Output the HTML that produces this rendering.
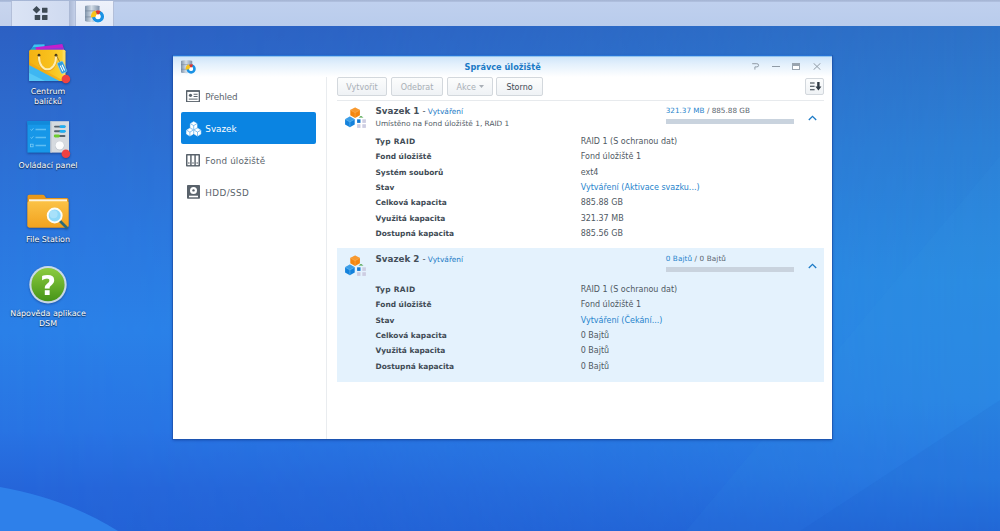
<!DOCTYPE html>
<html lang="cs">
<head>
<meta charset="utf-8">
<title>Správce úložiště</title>
<style>
*{box-sizing:border-box;margin:0;padding:0}
html,body{width:1000px;height:531px;overflow:hidden}
body{position:relative;font-family:"DejaVu Sans","Liberation Sans",sans-serif;font-size:8px;color:#414b55;background:#2a6fd9}
#bg{position:absolute;left:0;top:0;width:1000px;height:531px}
#taskbar{position:absolute;left:0;top:0;width:1000px;height:26px;background:linear-gradient(#a3b3d2 0,#aebedd 1.5px,#bfd0ee 2.5px,#b9ccec 100%)}
.tb{position:absolute;top:1px;height:25px}
#tb-l{left:0;width:11px;top:2px;height:24px;background:linear-gradient(#c8d5ee,#c2d0eb)}
#tb-main{left:11px;width:58px;background:linear-gradient(90deg,#dbe4f5,#cfdaf0);border-left:1px solid #b3bfd9}
#tb-sep{left:69px;width:5.5px;background:linear-gradient(90deg,#a9b7d3,#c3cfe8)}
#tb-app{left:74.5px;width:39px;background:linear-gradient(#eef2fb,#e2e9f7);border-left:1px solid #b3bfd9;border-right:1px solid #b3bfd9}
#taskbar svg{position:absolute}
.dl{position:absolute;left:0;width:96px;text-align:center;color:#fff;font-size:7.95px;line-height:10px;text-shadow:0 1px 1px rgba(0,0,0,.6),0 0 2px rgba(0,0,0,.35);white-space:nowrap}
.di{position:absolute;filter:drop-shadow(0 1px 1px rgba(0,10,60,.4))}
#win{position:absolute;left:173px;top:56px;width:659.3px;height:382.6px;background:#fff;box-shadow:0 -1px 0 0 #2874d6,0 0 0 1px rgba(28,80,170,.6),0 1px 3px 0 rgba(0,20,90,.45)}
#titlebar{position:absolute;left:0;top:0;width:100%;height:22px;background:linear-gradient(#55a4e6 0,#cfe5f9 1px,#e3f0fc 8px,#fff 21px)}
#title{position:absolute;left:0;width:100%;top:6px;text-align:center;font-weight:bold;color:#1b7ac6;font-size:8.2px;line-height:11px}
#titlebar svg{position:absolute}
#side-sep{position:absolute;left:153px;top:21px;width:1px;bottom:0;background:#e9ecef}
.nav{position:absolute;left:8px;width:135px;height:32px;font-size:8.8px;line-height:32px;color:#5b646c;white-space:nowrap}
.nav b{position:absolute;left:24.3px;top:.7px;font-weight:normal}
.nav.sel{background:#0a84e2;color:#fff;border-radius:2px}
.nav svg{position:absolute}
.btn{position:absolute;top:21.2px;height:18.4px;border:1px solid #d3d8dd;border-radius:2px;background:linear-gradient(#fcfdfd,#eff2f5);font-size:8px;line-height:14px;padding-top:3px;text-align:center;color:#a9afb6;white-space:nowrap}
.btn.on{color:#414b55}
.btn svg{position:absolute}
#tool-sep{position:absolute;left:164px;top:44px;width:487px;height:1px;background:#e7eaed}
.vol{position:absolute;left:164px;width:487px}
.vol svg{position:absolute}
.vt{position:absolute;left:38.5px;font-weight:bold;font-size:8.75px;line-height:12px;color:#454f59;white-space:nowrap}
.vt span{font-weight:normal;font-size:7.4px;color:#1b7ac6}
.vt i{font-style:normal;color:#454f59;font-size:8.5px}
.vs{position:absolute;left:38.5px;font-size:7.37px;line-height:10px;white-space:nowrap;color:#4f5963}
.row{position:absolute;left:38.5px;font-weight:bold;font-size:7.45px;line-height:10px;white-space:nowrap}
.val{position:absolute;left:243.7px;font-size:8px;line-height:10px;white-space:nowrap;color:#4f5963}
.blue,.val.blue{color:#2583cc}
.use{position:absolute;left:328.7px;font-size:7.25px;line-height:10px;white-space:nowrap;color:#5a646e}
.bar{position:absolute;left:328.5px;width:128px;height:4.5px;background:#c9d3de}
</style>
</head>
<body>
<svg id="bg" viewBox="0 0 1000 531" preserveAspectRatio="none">
<defs>
<linearGradient id="gr" x1="0" y1="0" x2="0" y2="1">
<stop offset="0" stop-color="#2d70c6"/><stop offset=".05" stop-color="#2d72c8"/><stop offset=".28" stop-color="#2c80d6"/><stop offset=".53" stop-color="#2a8ce2"/><stop offset=".75" stop-color="#2a86e4"/><stop offset=".9" stop-color="#2778e2"/><stop offset="1" stop-color="#2268d8"/>
</linearGradient>
<linearGradient id="gl" x1="0" y1="0" x2="0" y2="1">
<stop offset="0" stop-color="#2c5ec0"/><stop offset=".05" stop-color="#2c60c3"/><stop offset=".19" stop-color="#2d69cc"/><stop offset=".43" stop-color="#2b76de"/><stop offset=".62" stop-color="#2a80e8"/><stop offset=".81" stop-color="#2873e3"/><stop offset=".92" stop-color="#2565d9"/><stop offset="1" stop-color="#2362d6"/>
</linearGradient>
<linearGradient id="gm" x1="0" y1="0" x2="1" y2="0">
<stop offset="0" stop-color="#fff"/><stop offset=".35" stop-color="#fff" stop-opacity=".8"/><stop offset="1" stop-color="#fff" stop-opacity="0"/>
</linearGradient>
<mask id="mk"><rect width="1000" height="531" fill="url(#gm)"/></mask>
</defs>
<rect width="1000" height="531" fill="url(#gr)"/>
<rect width="1000" height="531" fill="url(#gl)" mask="url(#mk)"/>
<path d="M0 487 C45 495 85 510 118 531 L0 531Z" fill="#2e80ea"/>
<path d="M1000 156 L686 531 L1000 531Z" fill="#49a6f0" opacity=".06"/>
<path d="M1000 400 L800 531 L1000 531Z" fill="#1a50c0" opacity=".09"/>
</svg>
<div id="taskbar">
<div class="tb" id="tb-l"></div>
<div class="tb" id="tb-main"></div>
<div class="tb" id="tb-sep"></div>
<div class="tb" id="tb-app"></div>
<svg style="left:32px;top:5px" width="17" height="16" viewBox="0 0 17 16"><g fill="#3e4a55"><path d="M4.5 1 L8.3 4.8 L4.5 8.6 L.7 4.8Z"/><rect x="10" y="2.7" width="5.5" height="5" rx=".4"/><rect x="2.7" y="10" width="5.5" height="5" rx=".4"/><rect x="10" y="10" width="5.5" height="5" rx=".4"/></g></svg>
<svg style="left:84.5px;top:4.5px" width="20" height="18" viewBox="0 0 20 18">
<defs><linearGradient id="cya" x1="0" y1="0" x2="1" y2="0"><stop offset="0" stop-color="#7f93aa"/><stop offset=".45" stop-color="#d3dde7"/><stop offset="1" stop-color="#7d90a8"/></linearGradient></defs>
<path d="M0 1.2 C0 -.2 14.5 -.2 14.5 1.2 V15.8 C14.5 17.4 0 17.4 0 15.8Z" fill="url(#cya)"/>
<path d="M0 5.9 H14.5 M0 11.9 H14.5" stroke="#6b7d93" stroke-width=".6"/>
<circle cx="13" cy="11.5" r="6.4" fill="#fff"/>
<circle cx="13" cy="11.5" r="4.4" fill="none" stroke="#1b92e4" stroke-width="3.4"/>
<path d="M13 11.5 L6 12.4 A6.6 6.6 0 0 1 10.4 5.4Z" fill="#f8c21c"/>
<path d="M13 11.5 L10.6 5.8 A6.2 6.2 0 0 1 15.6 5.9Z" fill="#e5352b"/>
<circle cx="13" cy="11.5" r="2.3" fill="#fff"/>
</svg>
</div>
<svg class="di" style="left:26px;top:42px" width="46" height="44" viewBox="0 0 46 44">
<defs><linearGradient id="pg" x1="0" y1="0" x2="1" y2="0"><stop offset="0" stop-color="#f3b212"/><stop offset=".55" stop-color="#f8c01c"/><stop offset="1" stop-color="#fdd535"/></linearGradient></defs>
<path d="M5.5 6.5 L8 2.4 L18.5 2.2 L19 8Z" fill="#3cc4f2"/>
<path d="M4.2 8 L6.5 5 L12 5 L12 8Z" fill="#1f9fd8"/>
<path d="M9.5 5.2 L36.3 2 L38.3 8.5 L10 9Z" fill="#c41fcc"/>
<path d="M14 7 L37.5 5.6 L38.3 8.5 L14 9Z" fill="#8b35d8"/>
<path d="M3.1 9.3 Q3.1 7.8 4.6 7.8 H37.9 Q39.4 7.8 39.4 9.3 V38.9 H3.1Z" fill="url(#pg)"/>
<path d="M36.6 7.8 H37.9 Q39.4 7.8 39.4 9.3 V38.9 H36.6Z" fill="#fde27a" opacity=".6"/>
<path d="M3.1 22.9 L33.7 38.9 H3.1Z" fill="#3eb6f2"/>
<path d="M3.1 31 L19 38.9 H3.1Z" fill="#56c8f7"/>
<path d="M3.1 22.9 L33.7 38.9 L38 38.9 L3.1 20.2Z" fill="#ee9d15" opacity=".5"/>
<path d="M13 14.4 C13 31.5 30 31.5 30 14.4" fill="none" stroke="#e59a12" stroke-width="2.6" stroke-linecap="round" transform="translate(0 .7)"/>
<path d="M13 14.4 C13 31.5 30 31.5 30 14.4" fill="none" stroke="#fdeeb0" stroke-width="2.1" stroke-linecap="round"/>
<circle cx="13" cy="13.2" r="1.4" fill="#4a3a18"/><circle cx="30" cy="13.2" r="1.4" fill="#4a3a18"/>
<path d="M30.6 13.5 L34 20.5" stroke="#8a6a2a" stroke-width=".7"/>
<g transform="rotate(-24 36.1 25.4)"><rect x="33.1" y="19.6" width="6" height="11.6" rx="1.1" fill="#2f9de0" stroke="#8fd0f5" stroke-width=".6"/><path d="M35.1 23 V29.3 M37.1 23 V29.3" stroke="#fff" stroke-width="1.1"/></g>
<circle cx="39.9" cy="37" r="4.3" fill="#ef4242"/>
</svg>
<div class="dl" style="top:86.5px">Centrum<br>balíčků</div>
<svg class="di" style="left:26px;top:119px" width="46" height="42" viewBox="0 0 46 42">
<rect x="1.4" y="2.2" width="23" height="31.4" fill="#1797e8"/>
<rect x="1.4" y="2.2" width="23" height="3.6" fill="#128ada"/>
<rect x="24.4" y="2.2" width="18.6" height="31.4" fill="#d6dadf"/>
<rect x="24.4" y="2.2" width="1.3" height="31.4" fill="#c3c9d0"/>
<g stroke="#8fd8fb" stroke-width="1.5" opacity=".6"><path d="M9.5 10.6 H20 M9.5 18.6 H20 M9.5 26.6 H20"/></g>
<g fill="none" stroke="#8fd8fb" stroke-width=".8" opacity=".8"><path d="M4.6 10.3 l1 1.2 l1.8 -2.2 M4.6 18.3 l1 1.2 l1.8 -2.2"/><rect x="4.5" y="25.2" width="2.6" height="2.6"/></g>
<g stroke-linecap="round"><path d="M29 7.6 H38.5" stroke="#56616b" stroke-width="1.9"/><path d="M35 7.6 H38.3" stroke="#20aef2" stroke-width="2.8"/><path d="M29 12.3 H38.5" stroke="#56616b" stroke-width="1.9"/><path d="M35 12.3 H38.3" stroke="#20aef2" stroke-width="2.8"/><path d="M29 17 H38.5" stroke="#56616b" stroke-width="1.9"/><path d="M29.2 17 H32.5" stroke="#6ccb2e" stroke-width="2.8"/></g>
<circle cx="33.7" cy="26.8" r="4.7" fill="#c0c6cd"/>
<circle cx="33.7" cy="26.4" r="4.2" fill="#fbfcfd"/>
<circle cx="39.9" cy="34.8" r="4.3" fill="#ef4242"/>
</svg>
<div class="dl" style="top:161px">Ovládací panel</div>
<svg class="di" style="left:26px;top:193px" width="46" height="38" viewBox="0 0 46 38">
<defs><linearGradient id="fo" x1="0" y1="0" x2="0" y2="1"><stop offset="0" stop-color="#fbc246"/><stop offset="1" stop-color="#f2a21e"/></linearGradient></defs>
<path d="M1.5 3.5 Q1.5 1.7 3.3 1.7 H16.5 Q18 1.7 18.8 3 L20 5 H40.7 Q42.5 5 42.5 6.8 V32.7 Q42.5 34.5 40.7 34.5 H3.3 Q1.5 34.5 1.5 32.7Z" fill="#e8981a"/>
<rect x="3" y="6.3" width="38" height="4" fill="#fdf3dc"/>
<path d="M1.5 9.8 Q1.5 8.3 3 8.3 H41 Q42.5 8.3 42.5 9.8 V32.7 Q42.5 34.5 40.7 34.5 H3.3 Q1.5 34.5 1.5 32.7Z" fill="url(#fo)"/>
<path d="M33.5 27.5 L40.5 34.5" stroke="#2c6a78" stroke-width="2.6" stroke-linecap="round"/>
<circle cx="28.7" cy="22.5" r="7" fill="#8ed8f8" stroke="#fdfdf6" stroke-width="1.9"/>
<circle cx="27.6" cy="21.3" r="4" fill="#b4e6fb" opacity=".7"/>
</svg>
<div class="dl" style="top:235px">File Station</div>
<svg class="di" style="left:28px;top:265px" width="40" height="40" viewBox="0 0 40 40">
<defs><linearGradient id="hg" x1="0" y1="0" x2="0" y2="1"><stop offset="0" stop-color="#8ccb3f"/><stop offset="1" stop-color="#469418"/></linearGradient></defs>
<circle cx="20" cy="19.7" r="18.7" fill="#e6eef0" opacity=".85"/>
<circle cx="20" cy="19.7" r="16.6" fill="url(#hg)"/>
<text x="20" y="29.6" text-anchor="middle" font-family="DejaVu Sans, Liberation Sans, sans-serif" font-weight="bold" font-size="27" fill="#fff">?</text>
</svg>
<div class="dl" style="top:309px">Nápověda aplikace<br>DSM</div>
<div id="win">
<div id="titlebar"><svg style="left:7.5px;top:3.5px" width="15.5" height="14" viewBox="0 0 20 18">
<defs><linearGradient id="cyb" x1="0" y1="0" x2="1" y2="0"><stop offset="0" stop-color="#7f93aa"/><stop offset=".45" stop-color="#d3dde7"/><stop offset="1" stop-color="#7d90a8"/></linearGradient></defs>
<path d="M0 1.2 C0 -.2 14.5 -.2 14.5 1.2 V15.8 C14.5 17.4 0 17.4 0 15.8Z" fill="url(#cyb)"/>
<path d="M0 5.9 H14.5 M0 11.9 H14.5" stroke="#6b7d93" stroke-width=".6"/>
<circle cx="13" cy="11.5" r="6.4" fill="#fff"/>
<circle cx="13" cy="11.5" r="4.4" fill="none" stroke="#1b92e4" stroke-width="3.4"/>
<path d="M13 11.5 L6 12.4 A6.6 6.6 0 0 1 10.4 5.4Z" fill="#f8c21c"/>
<path d="M13 11.5 L10.6 5.8 A6.2 6.2 0 0 1 15.6 5.9Z" fill="#e5352b"/>
<circle cx="13" cy="11.5" r="2.3" fill="#fff"/>
</svg><div id="title">Správce úložiště</div><svg style="left:579px;top:7px" width="8" height="7" viewBox="0 0 8 7"><path d="M.2 .7 H4.8 Q6.6 .7 6.6 2.3 Q6.6 3.9 4.8 3.9 H2.9 V6.6" fill="none" stroke="#909ba6" stroke-width="1"/></svg>
<svg style="left:599px;top:10px" width="8" height="1" viewBox="0 0 8 1"><rect width="8" height="1" fill="#909ba6"/></svg>
<svg style="left:619px;top:7px" width="8" height="7" viewBox="0 0 8 7"><rect x=".5" y=".5" width="7" height="6" fill="#fff" stroke="#99a4af" stroke-width="1"/><rect x="0" y="0" width="8" height="3" fill="#99a4af"/></svg>
<svg style="left:640px;top:7px" width="8" height="7" viewBox="0 0 8 7"><path d="M.5 .2 L7.5 6.8 M7.5 .2 L.5 6.8" stroke="#909ba6" stroke-width="1"/></svg></div>
<div id="side-sep"></div>
<div class="nav" style="top:24px"><svg style="left:5.3px;top:9.5px" width="14" height="12.6" viewBox="0 0 14 13" preserveAspectRatio="none"><rect x=".65" y=".9" width="12.7" height="11.2" fill="none" stroke="#59626b" stroke-width="1.3"/><rect x=".65" y=".3" width="12.7" height="1.6" fill="#59626b"/><circle cx="4.5" cy="5.5" r="1.6" fill="#59626b"/><path d="M7.6 4.4 H11.6 M7.6 6.7 H11.6 M2.8 9.4 H11.6" stroke="#59626b" stroke-width="1"/></svg><b style="letter-spacing:-.12px">Přehled</b></div>
<div class="nav sel" style="top:56px"><svg style="left:4.2px;top:8.9px" width="17" height="16" viewBox="0 0 17 16"><path d="M8.70 0.70 L12.01 2.65 L12.01 6.55 L8.70 8.50 L5.39 6.55 L5.39 2.65Z" fill="#fff" stroke="#fff" stroke-width=".6" stroke-linejoin="round"/><path d="M8.70 4.60 L8.70 8.50 M8.70 4.60 L12.01 2.65 M8.70 4.60 L5.39 2.65" stroke="#3a9be6" stroke-width=".6" fill="none"/><path d="M4.90 7.20 L8.21 9.15 L8.21 13.05 L4.90 15.00 L1.59 13.05 L1.59 9.15Z" fill="#fff" stroke="#fff" stroke-width=".6" stroke-linejoin="round"/><path d="M4.90 11.10 L4.90 15.00 M4.90 11.10 L8.21 9.15 M4.90 11.10 L1.59 9.15" stroke="#3a9be6" stroke-width=".6" fill="none"/><path d="M12.50 7.20 L15.81 9.15 L15.81 13.05 L12.50 15.00 L9.19 13.05 L9.19 9.15Z" fill="#fff" stroke="#fff" stroke-width=".6" stroke-linejoin="round"/><path d="M12.50 11.10 L12.50 15.00 M12.50 11.10 L15.81 9.15 M12.50 11.10 L9.19 9.15" stroke="#3a9be6" stroke-width=".6" fill="none"/></svg><b>Svazek</b></div>
<div class="nav" style="top:88px"><svg style="left:5.3px;top:9.8px" width="14" height="13" viewBox="0 0 14 13"><rect x="0" y="0" width="14" height="12.6" rx=".8" fill="#59626b"/><g fill="#fff"><rect x="1.5" y="1.5" width="2.7" height="9.6"/><rect x="5.65" y="1.5" width="2.7" height="9.6"/><rect x="9.8" y="1.5" width="2.7" height="9.6"/></g><g fill="#59626b"><circle cx="2.85" cy="9" r=".8"/><circle cx="7" cy="9" r=".8"/><circle cx="11.15" cy="9" r=".8"/></g></svg><b style="letter-spacing:.15px">Fond úložiště</b></div>
<div class="nav" style="top:120px"><svg style="left:6px;top:9px" width="13" height="14" viewBox="0 0 13 14"><rect x="0" y="0" width="13" height="13.8" rx=".8" fill="#59626b"/><circle cx="6.5" cy="5.4" r="3.5" fill="#fff"/><circle cx="6.5" cy="5.4" r="1.2" fill="#59626b"/><rect x="2" y="10.7" width="9" height="1.6" fill="#fff"/></svg><b style="letter-spacing:.4px">HDD/SSD</b></div>

<div class="btn" style="left:164px;width:50px">Vytvořit</div>
<div class="btn" style="left:218px;width:52px">Odebrat</div>
<div class="btn" style="left:274px;width:46px;text-align:left;padding-left:8.5px">Akce<svg style="left:30.5px;top:7px" width="5" height="3" viewBox="0 0 5 3"><path d="M0 0 H5 L2.5 3Z" fill="#a9afb6"/></svg></div>
<div class="btn on" style="left:323px;width:47px">Storno</div>
<div class="btn" style="left:632.3px;width:19px;top:22px;height:16.5px"><svg style="left:3.3px;top:3.3px" width="12" height="9" viewBox="0 0 12 9"><path d="M0 1 H4.6 M0 4.3 H4.6 M0 7.7 H4.6" stroke="#2f3a44" stroke-width="1.1"/><path d="M7.2 0 H9.6 V4.6 H11.4 L8.4 8.6 L5.4 4.6 H7.2Z" fill="#2f3a44"/></svg></div>
<div id="tool-sep"></div>

<div class="vol" style="top:45px;height:146px">
<svg style="left:8px;top:5.5px" width="23" height="23" viewBox="0 0 23 23">
<path d="M13.5 10.6 L16 9 L18.5 10.6Z" fill="#3e9b3a"/>
<path d="M10.10 0.40 L14.92 3.05 L14.92 8.35 L10.10 11.00 L5.28 8.35 L5.28 3.05Z" fill="#f5860f"/><path d="M10.10 0.40 L14.92 3.05 L10.10 5.70 L5.28 3.05Z" fill="#fbb258" opacity=".45"/><path d="M10.10 5.70 L10.10 11.00 M10.10 5.70 L14.92 3.05 M10.10 5.70 L5.28 3.05" stroke="#fbb258" stroke-width=".55" fill="none"/>
<path d="M4.90 9.60 L9.72 12.25 L9.72 17.55 L4.90 20.20 L0.08 17.55 L0.08 12.25Z" fill="#1482dc"/><path d="M4.90 9.60 L9.72 12.25 L4.90 14.90 L0.08 12.25Z" fill="#6ec0f5" opacity=".45"/><path d="M4.90 14.90 L4.90 20.20 M4.90 14.90 L9.72 12.25 M4.90 14.90 L0.08 12.25" stroke="#6ec0f5" stroke-width=".55" fill="none"/>
<rect x="12.1" y="12.3" width="3.4" height="3.6" fill="#1478d0"/>
<rect x="17.3" y="12.3" width="3.6" height="3.6" fill="#cdcde2"/>
<rect x="12.1" y="17.2" width="3.4" height="3.7" fill="#cdcde2"/>
<rect x="17.3" y="17.2" width="3.6" height="3.7" fill="#cdcde2"/>
</svg>
<div class="vt" style="top:4.0px">Svazek 1 <span><i>-</i> Vytváření</span></div>
<div class="vs" style="top:17.7px">Umístěno na Fond úložiště 1, RAID 1</div>
<div class="use" style="top:4.7px"><span class="blue">321.37 MB</span> / 885.88 GB</div>
<div class="bar" style="top:18.3px"></div>
<svg style="left:470.5px;top:13.5px" width="9" height="6" viewBox="0 0 9 6"><path d="M.8 5 L4.5 1.3 L8.2 5" fill="none" stroke="#1b7ac6" stroke-width="1.3"/></svg>
<div class="row" style="top:36.0px; letter-spacing:.33px;">Typ RAID</div><div class="val" style="top:36.0px">RAID 1 (S ochranou dat)</div>
<div class="row" style="top:51.4px;">Fond úložiště</div><div class="val" style="top:51.4px">Fond úložiště 1</div>
<div class="row" style="top:66.7px;">Systém souborů</div><div class="val" style="top:66.7px">ext4</div>
<div class="row" style="top:82.0px;">Stav</div><div class="val blue" style="top:82.0px">Vytváření (Aktivace svazku...)</div>
<div class="row" style="top:97.3px;">Celková kapacita</div><div class="val" style="top:97.3px">885.88 GB</div>
<div class="row" style="top:112.6px;">Využitá kapacita</div><div class="val" style="top:112.6px">321.37 MB</div>
<div class="row" style="top:128.0px;">Dostupná kapacita</div><div class="val" style="top:128.0px">885.56 GB</div>
</div>
<div class="vol" style="top:192px;height:133.5px;background:#e4f2fd">
<svg style="left:8px;top:6.5px" width="23" height="23" viewBox="0 0 23 23">
<path d="M13.5 10.6 L16 9 L18.5 10.6Z" fill="#3e9b3a"/>
<path d="M10.10 0.40 L14.92 3.05 L14.92 8.35 L10.10 11.00 L5.28 8.35 L5.28 3.05Z" fill="#f5860f"/><path d="M10.10 0.40 L14.92 3.05 L10.10 5.70 L5.28 3.05Z" fill="#fbb258" opacity=".45"/><path d="M10.10 5.70 L10.10 11.00 M10.10 5.70 L14.92 3.05 M10.10 5.70 L5.28 3.05" stroke="#fbb258" stroke-width=".55" fill="none"/>
<path d="M4.90 9.60 L9.72 12.25 L9.72 17.55 L4.90 20.20 L0.08 17.55 L0.08 12.25Z" fill="#1482dc"/><path d="M4.90 9.60 L9.72 12.25 L4.90 14.90 L0.08 12.25Z" fill="#6ec0f5" opacity=".45"/><path d="M4.90 14.90 L4.90 20.20 M4.90 14.90 L9.72 12.25 M4.90 14.90 L0.08 12.25" stroke="#6ec0f5" stroke-width=".55" fill="none"/>
<rect x="12.1" y="12.3" width="3.4" height="3.6" fill="#1478d0"/>
<rect x="17.3" y="12.3" width="3.6" height="3.6" fill="#cdcde2"/>
<rect x="12.1" y="17.2" width="3.4" height="3.7" fill="#cdcde2"/>
<rect x="17.3" y="17.2" width="3.6" height="3.7" fill="#cdcde2"/>
</svg>
<div class="vt" style="top:5.2px">Svazek 2 <span><i>-</i> Vytváření</span></div>
<div class="use" style="top:5.7px;letter-spacing:.1px"><span class="blue">0 Bajtů</span> / 0 Bajtů</div>
<div class="bar" style="top:19.4px"></div>
<svg style="left:470.5px;top:14.5px" width="9" height="6" viewBox="0 0 9 6"><path d="M.8 5 L4.5 1.3 L8.2 5" fill="none" stroke="#1b7ac6" stroke-width="1.3"/></svg>
<div class="row" style="top:37.0px; letter-spacing:.33px;">Typ RAID</div><div class="val" style="top:37.0px">RAID 1 (S ochranou dat)</div>
<div class="row" style="top:52.3px;">Fond úložiště</div><div class="val" style="top:52.3px">Fond úložiště 1</div>
<div class="row" style="top:67.6px;">Stav</div><div class="val blue" style="top:67.6px">Vytváření (Čekání...)</div>
<div class="row" style="top:83.0px;">Celková kapacita</div><div class="val" style="top:83.0px">0 Bajtů</div>
<div class="row" style="top:98.3px;">Využitá kapacita</div><div class="val" style="top:98.3px">0 Bajtů</div>
<div class="row" style="top:113.6px;">Dostupná kapacita</div><div class="val" style="top:113.6px">0 Bajtů</div>
</div>
</div>
</body>
</html>
